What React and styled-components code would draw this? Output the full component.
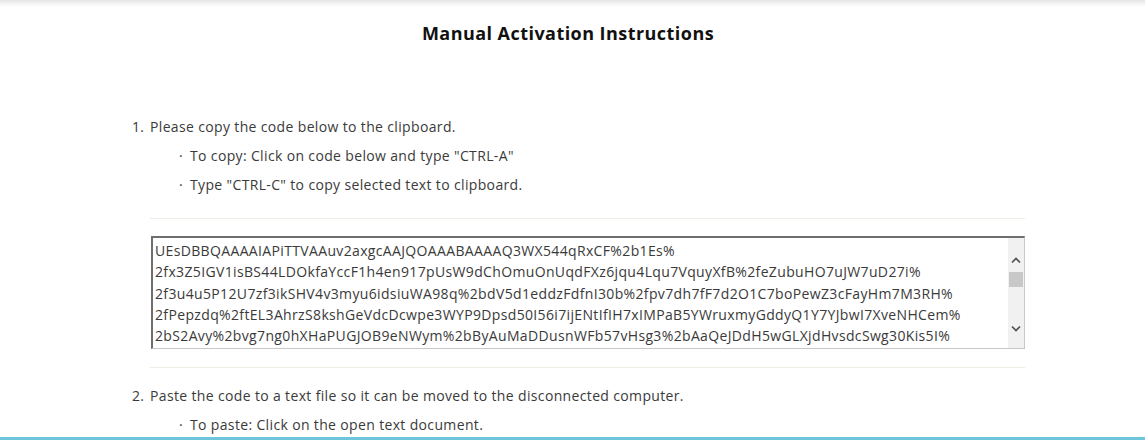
import React from 'react';
import styled, { createGlobalStyle } from 'styled-components';

const code = [
  'UEsDBBQAAAAIAPiTTVAAuv2axgcAAJQOAAABAAAAQ3WX544qRxCF%2b1Es%',
  '2fx3Z5IGV1isBS44LDOkfaYccF1h4en917pUsW9dChOmuOnUqdFXz6jqu4Lqu7VquyXfB%2feZubuHO7uJW7uD27i%',
  '2f3u4u5P12U7zf3ikSHV4v3myu6idsiuWA98q%2bdV5d1eddzFdfnI30b%2fpv7dh7fF7d2O1C7boPewZ3cFayHm7M3RH%',
  '2fPepzdq%2ftEL3AhrzS8kshGeVdcDcwpe3WYP9Dpsd50I56i7ijENtIfIH7xIMPaB5YWruxmyGddyQ1Y7YJbwI7XveNHCem%',
  '2bS2Avy%2bvg7ng0hXHaPUGJOB9eNWym%2bByAuMaDDusnWFb57vHsg3%2bAaQeJDdH5wGLXjdHvsdcSwg30Kis5I%',
  '2bq7Wm4rT0YhVfK9sLpD2aXcE8nQ%2fGmZ1uRyk5BoWtJ3vN6dHcEiP4LsQaXo7fT2mYgR8ZpKu%2fWb1DlN4%',
  '2fVq8xHsE3TzLm5oPcR6GdKaU1yIwN9jBfZhXvQs2%2bTeA7gMpYnC4kLoR0WdJuHiS3fE5xVb%',
  '2bPk7Tq1sLzN3GmYhW8aDvRcE0fJiXo5uK6yBnQg4MtS2pVeHdLwA9rC%2fIzUjOb7xNq%',
  'AAAAAAAAAAAgAAAAAAAAAQ3WX544qRxCFUEsFBgAAAAABAAEAOAAAAKwHAAAAAA%3d%3d',
];

const GlobalStyle = createGlobalStyle`
  html, body {
    margin: 0;
    padding: 0;
    background: #ffffff;
  }
  body {
    font-family: "Open Sans", "Liberation Sans", sans-serif;
    color: #3a3a3a;
    overflow: hidden;
  }
`;

// scrollbar arrows, drawn as chevrons
const Chevron = ({ down }) => (
  <svg width="10" height="7" viewBox="0 0 10 7">
    <path
      d={down ? 'M1 1.5 L5 5.5 L9 1.5' : 'M1 5.5 L5 1.5 L9 5.5'}
      fill="none"
      stroke="#505050"
      strokeWidth="1.7"
    />
  </svg>
);

function App() {
  return (
    <Page>
      <GlobalStyle />
      <Title>Manual Activation Instructions</Title>

      <Steps>
        <Step>
          <StepRow>
            <Num>1.</Num>
            <span>Please copy the code below to the clipboard.</span>
          </StepRow>
          <Bullets>
            <Bullet>To copy: Click on code below and type "CTRL-A"</Bullet>
            <Bullet>Type "CTRL-C" to copy selected text to clipboard.</Bullet>
          </Bullets>
          <Rule />
          <CodeFrame>
            <CodeBox readOnly value={code.join('\n')} spellCheck={false} />
            <Rail>
              <RailButton $pad="top"><Chevron /></RailButton>
              <RailTrack>
                <Thumb />
              </RailTrack>
              <RailButton $pad="bottom"><Chevron down /></RailButton>
            </Rail>
          </CodeFrame>
          <Rule $bottom />
        </Step>

        <Step>
          <StepRow>
            <Num>2.</Num>
            <span>Paste the code to a text file so it can be moved to the disconnected computer.</span>
          </StepRow>
          <Bullets>
            <Bullet>To paste: Click on the open text document.</Bullet>
          </Bullets>
        </Step>
      </Steps>

      <FooterLine />
    </Page>
  );
}

export default App;


const Page = styled.div`
  height: 440px;
  overflow: hidden;
  background: linear-gradient(#e4e4e4 0px, #f6f6f6 4px, #ffffff 7px);
  padding-top: 21px;
  box-sizing: border-box;
`

const Title = styled.h1`
  margin: 0;
  padding-right: 9px;
  text-align: center;
  font-size: 18px;
  line-height: 24px;
  font-weight: 700;
  color: #111111;
  letter-spacing: 0.45px;
`

const Steps = styled.div`
  margin-top: 67px;
  margin-left: 130px;
  width: 895px;
`

const Step = styled.div`
  display: flex;
  flex-direction: column;
`

const StepRow = styled.div`
  display: flex;
  align-items: center;
  font-size: 14px;
  line-height: 29px;
  font-weight: 400;
  letter-spacing: 0.35px;
`

const Num = styled.span`
  width: 20px;
  flex: none;
  padding-left: 2px;
  box-sizing: border-box;
`

const Bullets = styled.ul`
  list-style: none;
  margin: 0;
  padding: 0 0 0 49px;
`

const Bullet = styled.li`
  display: flex;
  font-size: 14px;
  line-height: 29px;
  letter-spacing: 0.35px;

  &::before {
    content: "·";
    width: 11px;
    flex: none;
  }
`

const Rule = styled.hr`
  border: 0;
  height: 1px;
  background: #f0ede4;
  margin: ${p => (p.$bottom ? '18px 0 13px 20px' : '19px 0 17px 20px')};
`

const CodeFrame = styled.div`
  display: flex;
  margin-left: 21px;
  width: 874px;
  height: 113px;
  box-sizing: border-box;
  border: 1px solid #c8c8c8;
  border-top: 2px solid #6e6e6e;
  border-left: 2px solid #6e6e6e;
  background: #ffffff;
`

const CodeBox = styled.textarea`
  flex: 1;
  min-width: 0;
  margin: 0;
  border: 0;
  resize: none;
  padding: 2px 2px 0;
  font-family: "Open Sans", "Liberation Sans", sans-serif;
  font-size: 14px;
  line-height: 21.3px;
  letter-spacing: 0.35px;
  color: #3a3a3a;
  white-space: pre;
  overflow: hidden;
  outline: none;
  background: transparent;
`

const Rail = styled.div`
  width: 16px;
  flex: none;
  display: flex;
  flex-direction: column;
  background: #f1f1f1;
`

const RailButton = styled.div`
  height: 34px;
  flex: none;
  display: flex;
  justify-content: center;
  align-items: ${p => (p.$pad === 'top' ? 'flex-start' : 'flex-end')};
  padding: ${p => (p.$pad === 'top' ? '19px 0 0' : '0 0 16px')};
  box-sizing: border-box;
`

const RailTrack = styled.div`
  flex: 1;
  padding: 0 1px;
`

const Thumb = styled.div`
  height: 15px;
  background: #c8c8c8;
`

const FooterLine = styled.div`
  position: fixed;
  left: 0;
  right: 0;
  bottom: 0;
  height: 3px;
  background: #6ec6dc;
`
